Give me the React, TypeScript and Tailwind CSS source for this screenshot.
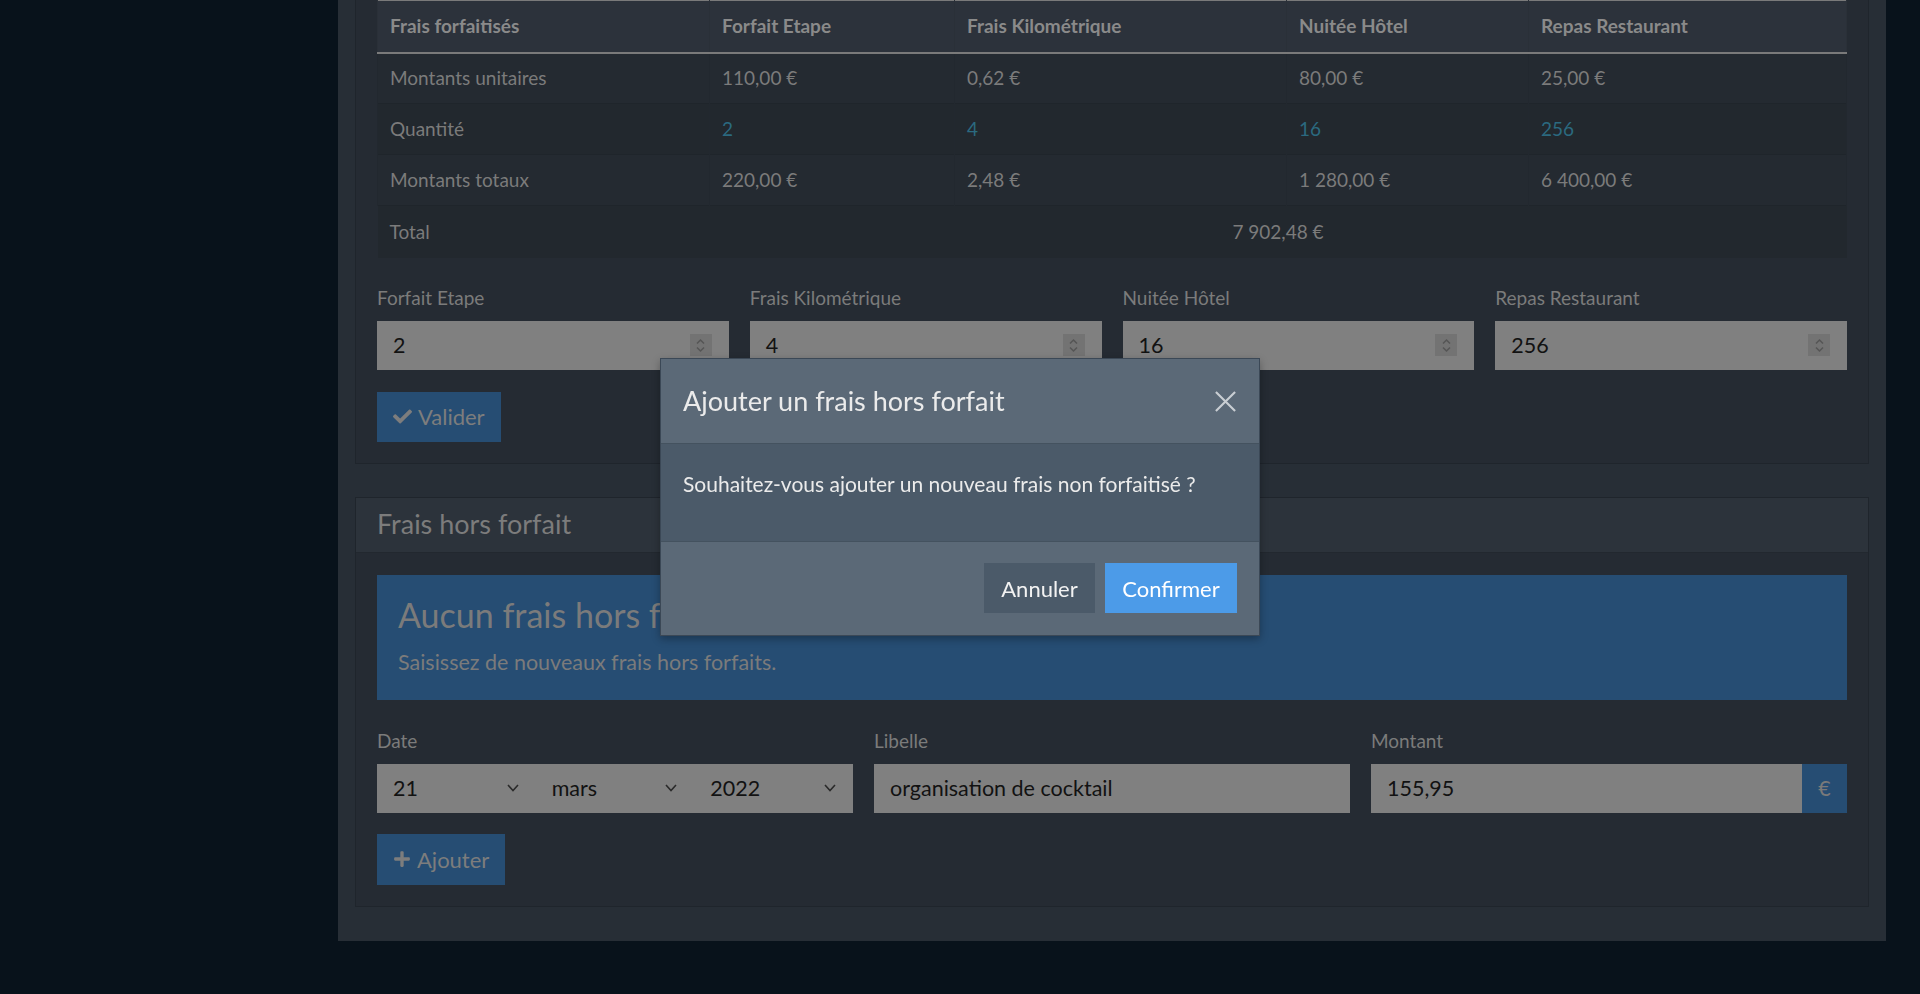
import { FaCheck, FaPlus } from "react-icons/fa";

const cols = [
  { name: "Forfait Etape", unit: "110,00 €", qty: "2", total: "220,00 €" },
  { name: "Frais Kilométrique", unit: "0,62 €", qty: "4", total: "2,48 €" },
  { name: "Nuitée Hôtel", unit: "80,00 €", qty: "16", total: "1 280,00 €" },
  { name: "Repas Restaurant", unit: "25,00 €", qty: "256", total: "6 400,00 €" },
];

const widths = ["w-[332px]", "w-[245px]", "w-[332px]", "w-[242px]", ""];

function Spinner() {
  return (
    <span className="flex h-[22px] w-[22px] items-center justify-center bg-[#737373]">
      <svg width="11" height="17" viewBox="0 0 11 17" fill="none" stroke="#555" strokeWidth="1.5">
        <path d="M2 6.5 L5.5 3 L9 6.5" />
        <path d="M2 10.5 L5.5 14 L9 10.5" />
      </svg>
    </span>
  );
}

function Chevron() {
  return (
    <svg width="12" height="8" viewBox="0 0 12 8" fill="none" stroke="#2a2a2a" strokeWidth="1.6">
      <path d="M1 1 L6 6.5 L11 1" />
    </svg>
  );
}

function Modal() {
  return (
    <div className="fixed inset-0 z-10 flex items-start justify-center pt-[358px]">
      <div className="w-[600px] border border-[#3b4856] bg-[#4b5a69] text-[#ebebeb] shadow-[0_3px_8px_rgba(0,0,0,0.3)]">
        <div className="flex items-center justify-between border-b border-[#44525f] bg-[#5b6977] py-[23px] pl-[22px] pr-[22px]">
          <h5 className="text-[27px] leading-[38px]">Ajouter un frais hors forfait</h5>
          <svg width="23" height="23" viewBox="0 0 24 24" stroke="#c9ced3" strokeWidth="2.2">
            <path d="M2 2 L22 22 M22 2 L2 22" />
          </svg>
        </div>
        <div className="px-[22px] pb-[42px] pt-[25px] text-[21px] leading-[30px]">
          Souhaitez-vous ajouter un nouveau frais non forfaitisé ?
        </div>
        <div className="flex justify-end gap-[10px] border-t border-[#44525f] bg-[#5b6977] px-[22px] pb-[22px] pt-[21px]">
          <button className="h-[50px] w-[111px] bg-[#4b5a69] text-[22px] text-[#f2f2f2]">Annuler</button>
          <button className="h-[50px] w-[132px] bg-[#4c9be8] text-[22px] text-white">Confirmer</button>
        </div>
      </div>
    </div>
  );
}

export default function App() {
  return (
    <div className="relative flex min-h-[994px] bg-[#08121b] font-['Lato','Liberation_Sans',sans-serif] text-[#7b7b7b]">
      <aside className="w-[338px] shrink-0" />
      <div className="h-[941px] w-[1548px] bg-[#272e36] px-[17px]">
        {/* frais forfaitisés */}
        <section className="border border-t-0 border-[#1f252c] bg-[#252b33] px-[21px] pb-[21px]">
          <table className="w-full border-collapse text-[19px]">
            <thead>
              <tr className="h-[52px] border-y-2 border-t-[1px] border-[#7a7a7a] bg-[#2c323b] text-[#8a8a8a]">
                <th className={`border-x border-[#2a3038] px-3 text-left font-bold ${widths[0]}`}>Frais forfaitisés</th>
                {cols.map((c, i) => (
                  <th key={c.name} className={`border-x border-[#2a3038] px-3 text-left font-bold ${widths[i + 1]}`}>
                    {c.name}
                  </th>
                ))}
              </tr>
            </thead>
            <tbody>
              <tr className="h-[51px] border-b border-[#1f252b] bg-[#242a31]">
                <td className="border-x border-[#22282f] px-3">Montants unitaires</td>
                {cols.map((c) => (
                  <td key={c.name} className="border-x border-[#22282f] px-3">{c.unit}</td>
                ))}
              </tr>
              <tr className="h-[51px] border-b border-[#1f252b] bg-[#22282e]">
                <td className="border-x border-[#22282f] px-3">Quantité</td>
                {cols.map((c) => (
                  <td key={c.name} className="border-x border-[#22282f] px-3 text-[#2b6a80]">{c.qty}</td>
                ))}
              </tr>
              <tr className="h-[51px] border-b border-[#1f252b] bg-[#242a31]">
                <td className="border-x border-[#22282f] px-3">Montants totaux</td>
                {cols.map((c) => (
                  <td key={c.name} className="border-x border-[#22282f] px-3">{c.total}</td>
                ))}
              </tr>
              <tr className="h-[52px] bg-[#22282e]">
                <td className="px-3">Total</td>
                <td colSpan={4} className="px-3 text-center">7 902,48 €</td>
              </tr>
            </tbody>
          </table>

          <div className="mt-[26px] grid grid-cols-4 gap-x-[21px]">
            {cols.map((c) => (
              <div key={c.name}>
                <label className="block text-[19px] leading-[27px]">{c.name}</label>
                <div className="mt-[10px] flex h-[49px] items-center justify-between bg-[#808080] pl-4 pr-[17px] text-[21.5px] text-[#121212]">
                  <span>{c.qty}</span>
                  <Spinner />
                </div>
              </div>
            ))}
          </div>

          <button className="mt-[22px] flex h-[50px] items-center gap-[6px] bg-[#264d73] px-4 text-[22px] text-[#7d7d7d]">
            <FaCheck className="text-[19px]" />
            Valider
          </button>
        </section>

        {/* frais hors forfait */}
        <section className="mt-[33px] border border-[#1f252c] bg-[#252b33]">
          <div className="flex h-[55px] items-center border-b border-[#22282f] bg-[#2c333b] px-[21px] text-[27px] text-[#7c7c7c]">
            Frais hors forfait
          </div>
          <div className="px-[21px] pb-[21px] pt-[22px]">
            <div className="bg-[#264d73] px-[21px] pb-[23px] pt-[19px]">
              <h4 className="text-[34px] leading-[41px] text-[#7b7b7b]">Aucun frais hors forfait</h4>
              <p className="mt-[12px] text-[21.5px] leading-[30px] text-[#7b7b7b]">Saisissez de nouveaux frais hors forfaits.</p>
            </div>

            <div className="mt-[27px] grid grid-cols-3 gap-x-[21px]">
              <div>
                <label className="block text-[19px] leading-[27px]">Date</label>
                <div className="mt-[10px] flex h-[49px] bg-[#808080] text-[21.5px] text-[#121212]">
                  {["21", "mars", "2022"].map((v) => (
                    <div key={v} className="flex flex-1 items-center justify-between pl-4 pr-[17px]">
                      <span>{v}</span>
                      <Chevron />
                    </div>
                  ))}
                </div>
              </div>
              <div>
                <label className="block text-[19px] leading-[27px]">Libelle</label>
                <div className="mt-[10px] flex h-[49px] items-center bg-[#808080] pl-4 text-[21.5px] text-[#121212]">
                  organisation de cocktail
                </div>
              </div>
              <div>
                <label className="block text-[19px] leading-[27px]">Montant</label>
                <div className="mt-[10px] flex h-[49px] text-[21.5px]">
                  <div className="flex flex-1 items-center bg-[#808080] pl-4 text-[#121212]">155,95</div>
                  <div className="flex w-[45px] items-center justify-center bg-[#264d73] text-[#7a7a7a]">€</div>
                </div>
              </div>
            </div>

            <button className="mt-[21px] flex h-[51px] items-center gap-[6px] bg-[#264d73] px-4 text-[22px] text-[#7d7d7d]">
              <FaPlus className="text-[18px]" />
              Ajouter
            </button>
          </div>
        </section>
      </div>
      <Modal />
    </div>
  );
}
